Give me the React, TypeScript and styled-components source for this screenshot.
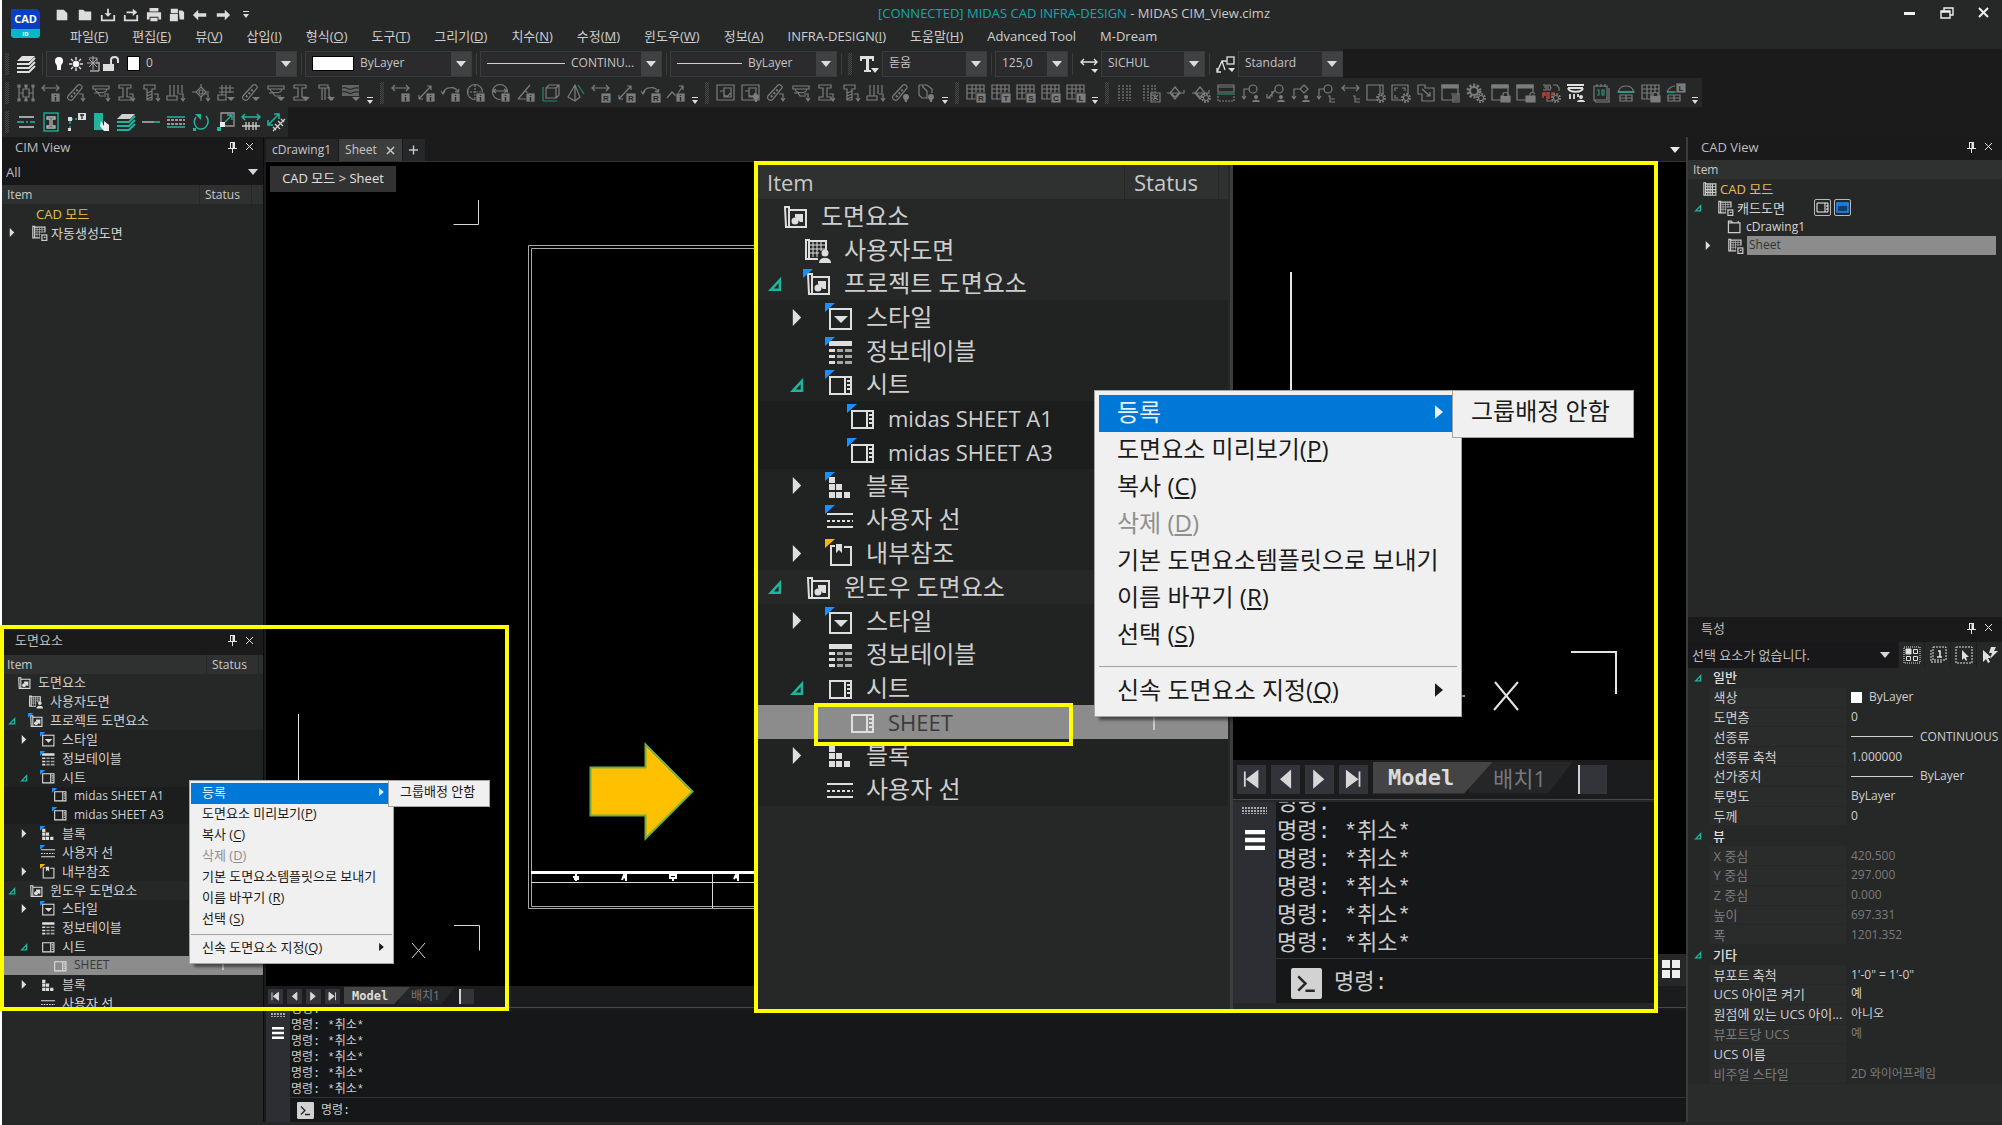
import React from 'react';
import styled, { createGlobalStyle, ThemeProvider, css } from 'styled-components';

/* ---------- scales ---------- */

const small = {
  font: 13, latin: 12, head: 19, treeHeight: 339, root: 14, first: 6, indent: 12, expander: 20, icon: 15, iconGap: 7,
  statusWidth: 52, endWidth: 5, headPad: 5, tick: 39,
  menuWidth: 205, menuTop: 2, menuSide: 1, menuBottom: 4, item: 21, itemPad: 11, itemLift: 3, sepTop: 4, sepBottom: 3, arrow: 8,
  subLeft: 198, subWidth: 102, subHeight: 27, subTop: 1,
  bar: 22, nav: 15, navGap: 4, barPad: 2, tab: 66, tabHeight: 17, tabFont: 12, layout: 56, layoutPad: 12,
  side: 24, mono: 12, line: 16, logDrop: 1, prompt: 24, promptTop: 1, promptIcon: 17, promptPad: 7, promptGap: 7, burger: 12,
};
const large: typeof small = {
  font: 24, latin: 22, head: 34, treeHeight: 607, root: 22, first: 10, indent: 22, expander: 35, icon: 28, iconGap: 13,
  statusWidth: 94, endWidth: 10, headPad: 9, tick: 73,
  menuWidth: 368, menuTop: 4, menuSide: 4, menuBottom: 6, item: 37, itemPad: 18, itemLift: 4, sepTop: 12, sepBottom: 6, arrow: 14,
  subLeft: 357, subWidth: 182, subHeight: 48, subTop: 3,
  bar: 40, nav: 29, navGap: 5, barPad: 4, tab: 120, tabHeight: 32, tabFont: 22, layout: 104, layoutPad: 24,
  side: 43, mono: 22, line: 28, logDrop: 1, prompt: 44, promptTop: 5, promptIcon: 31, promptPad: 15, promptGap: 12, burger: 20,
};

const Global = createGlobalStyle`
  * { box-sizing: border-box; }
  body { margin: 0; background: #fff; overflow: hidden; }
  button, select, input { font: inherit; color: inherit; border: 0; margin: 0; padding: 0; background: none; }
  ul { list-style: none; margin: 0; padding: 0; }
  svg { display: block; flex: none; }
`;

/* ---------- frame ---------- */

const Root = styled.div`
  position: relative;
  height: 100vh;
  padding-left: 2px;
  display: flex;
  flex-direction: column;
  background: #fff;
  color: #d6d6d6;
  font: 13px/18px "Open Sans", "Noto Sans CJK KR", sans-serif;
`;
const Header = styled.header`
  display: flex;
  height: 49px;
  padding: 0 0 0 9px;
  background: #262827;
`;
const HeaderRows = styled.div`
  flex: 1;
  display: flex;
  flex-direction: column;
`;
const TitleRow = styled.div`
  display: flex;
  align-items: center;
  height: 25px;
  padding-left: 10px;
`;
const Quick = styled.div`
  display: flex;
  padding-top: 4px;
`;
const QuickButton = styled.button`
  width: 23px;
  height: 20px;
  display: grid;
  place-items: center;
  color: #dcdcdc;
`;
const Title = styled.div`
  flex: 1;
  text-align: center;
  color: #c9c9c9;
  span { color: #12a9a9; }
`;
const WindowButton = styled.button`
  width: 37px;
  height: 24px;
  display: grid;
  place-items: center;
  color: #f0f0f0;
`;
const MenuBar = styled.nav`
  display: flex;
  gap: 24px;
  padding: 2px 0 0 30px;
  button { white-space: nowrap; color: #cfcfcf; }
`;

const ToolRow = styled.div<{ $h: number }>`
  display: flex;
  height: ${p => p.$h}px;
  background: #1b1b1b;
`;
const ToolBar = styled.div`
  display: flex;
  align-items: center;
  background: #262827;
`;
const Grip = styled.i`
  width: 4px;
  height: 22px;
  margin: 0 4px 0 3px;
  background: repeating-conic-gradient(#484a49 0 25%, #262827 0 50%) 0 0 / 2px 2px;
`;
const Tool = styled.button<{ $on?: boolean }>`
  width: 25px;
  height: 26px;
  display: grid;
  place-items: center;
  color: ${p => (p.$on ? '#e0e0e0' : '#7c7c7c')};
`;
const Overflow = styled.button`
  width: 14px;
  height: 26px;
  padding-top: 16px;
  display: grid;
  place-items: center;
  color: #dcdcdc;
`;
const Combo = styled.label<{ $w: number }>`
  display: flex;
  align-items: center;
  width: ${p => p.$w}px;
  height: 26px;
  padding-left: 6px;
  gap: 6px;
  background: #2b2b2d;
  border: 1px solid #3a3b3d;
  select {
    flex: 1;
    min-width: 0;
    height: 24px;
    padding-bottom: 2px;
    appearance: none;
    color: #c4c4c4;
    font-size: 12px;
  }
`;
const ComboArrow = styled.span`
  width: 20px;
  height: 24px;
  display: grid;
  place-items: center;
  background: #3f4143;
  color: #dcdcdc;
`;
const Divider = styled.i`
  width: 1px;
  height: 22px;
  margin: 0 3px 0 4px;
  background: #3a3b3b;
`;
const Swatch = styled.i<{ $w: number }>`
  width: ${p => p.$w}px;
  height: 15px;
  background: #fff;
  border: 1px solid #000;
  flex: none;
`;
const LineSample = styled.i<{ $w: number }>`
  width: ${p => p.$w}px;
  height: 1px;
  background: #cfcfcf;
  flex: none;
`;

const Workspace = styled.main`
  flex: 1;
  min-height: 0;
  display: grid;
  grid-template-columns: 261px minmax(0, 1fr) 314px;
  border-bottom: 3px solid #262827;
`;
const Side = styled.aside`
  display: flex;
  flex-direction: column;
  min-height: 0;
  background: #262827;
`;
const Panel = styled.section<{ $grow?: boolean }>`
  display: flex;
  flex-direction: column;
  min-height: 0;
  ${p => p.$grow && css`flex: 1 1 0;`}
`;
const PanelHead = styled.div<{ $tall?: boolean }>`
  display: flex;
  align-items: center;
  height: ${p => (p.$tall ? 25 : 23)}px;
  flex: none;
  padding: 0 5px 4px 13px;
  background: #1a1a1b;
  color: #bdbdbd;
  h2 { flex: 1; margin: 0; font: inherit; }
`;
const HeadButton = styled.button`
  width: 17px;
  height: 18px;
  display: grid;
  place-items: center;
  color: #e6e6e6;
`;
const Filter = styled.label`
  display: flex;
  align-items: center;
  height: 25px;
  flex: none;
  padding: 0 5px 1px 4px;
  background: #18181a;
  select { flex: 1; min-width: 0; appearance: none; color: #bdbdbd; }
`;

/* ---------- tree ---------- */

const Columns = styled.div<{ $end?: number }>`
  display: flex;
  flex: none;
  height: ${p => p.theme.head}px;
  line-height: ${p => p.theme.head}px;
  font-size: ${p => p.theme.latin}px;
  background: #2f3130;
  color: #c9c9c9;
  span { padding-left: ${p => p.theme.headPad}px; }
  span:nth-child(1) { flex: 1; }
  span:nth-child(2) { width: ${p => p.theme.statusWidth}px; border-left: 1px solid #252626; }
  span:nth-child(3) { width: ${p => p.$end ?? p.theme.endWidth}px; padding: 0; border-left: 1px solid #252626; }
`;
const TreeClip = styled.div<{ $h?: number }>`
  overflow: hidden;
  ${p => p.$h && css`height: ${p.$h}px;`}
`;
const TreeList = styled.ul`
  display: grid;
  grid-auto-rows: 1fr;
  height: ${p => p.theme.treeHeight}px;
`;
const TreeRow = styled.li<{ $level: number; $selected?: boolean }>`
  display: flex;
  align-items: center;
  overflow: hidden;
  font-size: ${p => p.theme.font}px;
  line-height: 1;
  white-space: nowrap;
  padding-left: ${p => (p.$level === 0 ? p.theme.root : p.theme.first + (p.$level - 1) * p.theme.indent)}px;
  color: ${p => (p.$selected ? '#3a3a3a' : '#cfcfcf')};
  background: ${p => (p.$selected ? '#8c8c8c' : ['#262827', '#262827', '#212222', '#1c1d1d'][p.$level])};
`;
const Expander = styled.span`
  width: ${p => p.theme.expander}px;
  svg { width: ${p => Math.round(p.theme.icon * 0.5)}px; height: ${p => Math.round(p.theme.icon * 0.6)}px; }
`;
const TreeIcon = styled.span`
  margin-right: ${p => p.theme.iconGap}px;
  color: #dedede;
  svg { width: ${p => p.theme.icon}px; height: ${p => p.theme.icon}px; }
`;
const Latin = styled.span`
  font-size: ${p => p.theme.latin}px;
`;
const StatusTick = styled.i`
  width: 2px;
  height: 50%;
  margin: 0 ${p => p.theme.tick}px 0 auto;
  background: #c8c8c8;
`;

type GlyphName = 'root' | 'user' | 'style' | 'table' | 'sheet' | 'block' | 'line' | 'ref' | 'auto' | 'folder';

const Glyph = ({ name, flag }: { name: GlyphName; flag?: string }) => (
  <svg viewBox="0 0 28 28" fill="none" stroke="currentColor" strokeWidth="2">
    {name === 'root' && <><path d="M5 5h4v20H6zM9 8h17v17H6" /><circle cx="15" cy="19" r="3.5" fill="currentColor" stroke="none" /><path d="M15 12h8v8h-3l-5-5z" fill="currentColor" stroke="none" /></>}
    {(name === 'user' || name === 'auto') && <><path d="M3 4h3v19H3zM6 5h17v9M4 23h11" /><path d="M10 6v15M14 6v15M18 6v9M7 9h16M7 13h16M7 17h9" strokeWidth="1" /></>}
    {name === 'user' && <><circle cx="22" cy="17" r="3.5" fill="currentColor" stroke="none" /><path d="M16 27c0-3 2-5 6-5s6 2 6 5z" fill="currentColor" stroke="none" /></>}
    {name === 'auto' && <><rect x="18" y="18" width="8" height="9" /><path d="M21 22h3" /></>}
    {name === 'style' && <><rect x="5" y="6" width="21" height="20" /><path d="M9 13h14l-7 7z" fill="currentColor" stroke="none" /></>}
    {name === 'table' && <><path d="M4 4h23v5H4zM4 12h6v3H4zM4 18h6v3H4zM4 24h6v3H4z" fill="currentColor" stroke="none" /><path d="M12 12h6v3h-6zM20 12h7v3h-7zM12 18h6v3h-6zM20 18h7v3h-7zM12 24h6v3h-6zM20 24h7v3h-7z" fill="currentColor" opacity=".7" stroke="none" /></>}
    {name === 'sheet' && <><path d="M5 7h21v17H5z" /><path d="M20 7v17" /><path d="M22 11h3M22 15h3M22 19h3" /></>}
    {name === 'block' && <path d="M4 5h6v6H4zM4 12h6v6H4zM11 12h6v6h-6zM4 20h6v6H4zM11 20h6v6h-6zM19 20h6v6h-6z" fill="currentColor" stroke="none" />}
    {name === 'line' && <><path d="M2 9h26M2 22h26" /><path d="M2 16h26" strokeDasharray="3 2" /></>}
    {name === 'ref' && <><path d="M10 7H6v19h20V8h-7" /><path d="M11 5h6v9l-3-3-3 3z" fill="currentColor" stroke="none" /></>}
    {name === 'folder' && <path d="M4 8h19v16H4zM4 8V5h5l2 3M20 5v3" />}
    {flag && <path d="M0 0h10L0 9z" fill={flag} stroke="none" />}
  </svg>
);

const Twist = ({ open }: { open: boolean }) =>
  open ? (
    <svg viewBox="0 0 10 12" fill="none" stroke="#1fb59c" strokeWidth="1.8"><path d="M8.500 3.500v7H2z" /></svg>
  ) : (
    <svg viewBox="0 0 10 12" fill="#dedede"><path d="M2 0l6 6-6 6z" /></svg>
  );

type Node = { level: number; icon: GlyphName; text: string; flag?: string; open?: boolean; selected?: boolean };
const BLUE = '#1a8fff';
const nodes: Node[] = [
  { level: 0, icon: 'root', text: '도면요소' },
  { level: 1, icon: 'user', text: '사용자도면' },
  { level: 1, icon: 'root', text: '프로젝트 도면요소', flag: BLUE, open: true },
  { level: 2, icon: 'style', text: '스타일', flag: BLUE, open: false },
  { level: 2, icon: 'table', text: '정보테이블', flag: BLUE },
  { level: 2, icon: 'sheet', text: '시트', flag: BLUE, open: true },
  { level: 3, icon: 'sheet', text: 'midas SHEET A1', flag: BLUE },
  { level: 3, icon: 'sheet', text: 'midas SHEET A3', flag: BLUE },
  { level: 2, icon: 'block', text: '블록', flag: BLUE, open: false },
  { level: 2, icon: 'line', text: '사용자 선', flag: BLUE },
  { level: 2, icon: 'ref', text: '내부참조', flag: '#f5b800', open: false },
  { level: 1, icon: 'root', text: '윈도우 도면요소', open: true },
  { level: 2, icon: 'style', text: '스타일', flag: BLUE, open: false },
  { level: 2, icon: 'table', text: '정보테이블' },
  { level: 2, icon: 'sheet', text: '시트', open: true },
  { level: 3, icon: 'sheet', text: 'SHEET', selected: true },
  { level: 2, icon: 'block', text: '블록', open: false },
  { level: 2, icon: 'line', text: '사용자 선' },
];

const ElementTree = ({ clip }: { clip?: number }) => (
  <>
    <Columns><span>Item</span><span>Status</span><span /></Columns>
    <TreeClip $h={clip}>
      <TreeList>
        {nodes.map((n, i) => (
          <TreeRow key={i} $level={n.level} $selected={n.selected}>
            {n.level > 0 && <Expander>{n.open !== undefined && <Twist open={n.open} />}</Expander>}
            <TreeIcon><Glyph name={n.icon} flag={n.flag} /></TreeIcon>
            {n.level === 3 ? <Latin>{n.text}</Latin> : n.text}
            {n.selected && <StatusTick />}
          </TreeRow>
        ))}
      </TreeList>
    </TreeClip>
  </>
);

/* ---------- context menu ---------- */

const MenuBox = styled.div<{ $x: number; $y: number }>`
  position: absolute;
  z-index: 3;
  left: ${p => p.$x}px;
  top: ${p => p.$y}px;
  width: ${p => p.theme.menuWidth}px;
  padding: ${p => `${p.theme.menuTop}px ${p.theme.menuSide}px ${p.theme.menuBottom}px`};
  background: #f0f0f0;
  border: 1px solid #a5a5a5;
  box-shadow: 4px 4px 3px -1px rgba(0, 0, 0, 0.5);
  font-size: ${p => p.theme.font}px;
  color: #1a1a1a;
`;
const MenuItem = styled.button<{ $active?: boolean }>`
  display: flex;
  align-items: center;
  justify-content: space-between;
  width: 100%;
  height: ${p => p.theme.item}px;
  line-height: 1;
  padding: 0 ${p => p.theme.arrow}px ${p => p.theme.itemLift}px ${p => p.theme.itemPad}px;
  white-space: nowrap;
  background: ${p => (p.$active ? '#0078d7' : 'transparent')};
  color: ${p => (p.$active ? '#e8f2fc' : '#1a1a1a')};
  &:disabled { color: #8f8f8f; }
  u { text-underline-offset: 2px; }
  svg { width: ${p => Math.round(p.theme.arrow * 0.6)}px; height: ${p => p.theme.arrow}px; }
`;
const MenuLine = styled.hr`
  height: 1px;
  border: 0;
  margin: ${p => p.theme.sepTop}px 0 ${p => p.theme.sepBottom}px;
  background: #a0a0a0;
`;
const SubMenu = styled.div`
  position: absolute;
  left: ${p => p.theme.subLeft}px;
  top: -1px;
  width: ${p => p.theme.subWidth}px;
  height: ${p => p.theme.subHeight}px;
  padding-top: ${p => p.theme.subTop}px;
  background: #f0f0f0;
  border: 1px solid #a5a5a5;
`;
const MenuArrow = () => <svg viewBox="0 0 6 10" fill="currentColor"><path d="M0 0l6 5-6 5z" /></svg>;

const ContextMenu = ({ x, y }: { x: number; y: number }) => (
  <MenuBox $x={x} $y={y} role="menu">
    <MenuItem $active><span>등록</span><MenuArrow /></MenuItem>
    <MenuItem><span>도면요소 미리보기(<u>P</u>)</span></MenuItem>
    <MenuItem><span>복사 (<u>C</u>)</span></MenuItem>
    <MenuItem disabled><span>삭제 (<u>D</u>)</span></MenuItem>
    <MenuItem><span>기본 도면요소템플릿으로 보내기</span></MenuItem>
    <MenuItem><span>이름 바꾸기 (<u>R</u>)</span></MenuItem>
    <MenuItem><span>선택 (<u>S</u>)</span></MenuItem>
    <MenuLine />
    <MenuItem><span>신속 도면요소 지정(<u>Q</u>)</span><MenuArrow /></MenuItem>
    <SubMenu><MenuItem><span>그룹배정 안함</span></MenuItem></SubMenu>
  </MenuBox>
);

/* ---------- layout tabs and command line ---------- */

const LayoutBar = styled.div`
  display: flex;
  align-items: center;
  flex: none;
  height: ${p => p.theme.bar}px;
  padding: 0 0 0 ${p => p.theme.barPad}px;
  gap: ${p => p.theme.navGap}px;
  background: #1b1c1e;
  border-bottom: 1px solid #47484a;
`;
const Nav = styled.button`
  width: ${p => p.theme.nav}px;
  height: ${p => p.theme.nav}px;
  display: grid;
  place-items: center;
  background: #33343a;
  color: #d8d8d8;
  svg { width: 70%; height: 70%; }
`;
const ModelTab = styled.button`
  position: relative;
  z-index: 1;
  width: ${p => p.theme.tab}px;
  height: ${p => p.theme.tabHeight}px;
  margin-bottom: ${p => p.theme.barPad}px;
  padding-left: ${p => Math.round(p.theme.nav / 2)}px;
  text-align: left;
  font: bold ${p => p.theme.tabFont}px/1 "DejaVu Sans Mono", monospace;
  background: #444;
  color: #dcdcdc;
  clip-path: polygon(0 0, 100% 0, 76% 100%, 0 100%);
`;
const LayoutTab = styled(ModelTab)`
  z-index: 0;
  width: ${p => p.theme.layout}px;
  padding-left: ${p => p.theme.layoutPad}px;
  margin-left: -${p => p.theme.nav}px;
  font: ${p => p.theme.tabFont}px/1 "Open Sans", "Noto Sans CJK KR", sans-serif;
  background: #242628;
  color: #77787c;
`;
const Thumb = styled(Nav)`
  border-left: 2px solid #d0d0d0;
`;
const navPaths = ['M3 2v12M13 2L5 8l8 6z', 'M12 2L5 8l7 6z', 'M4 2l7 6-7 6z', 'M13 2v12M3 2l8 6-8 6z'];

const LayoutTabs = () => (
  <LayoutBar>
    {navPaths.map((d, i) => (
      <Nav key={i} aria-label={`layout ${i + 1}`}>
        <svg viewBox="0 0 16 16" fill="currentColor" stroke="currentColor" strokeWidth="1.4"><path d={d} /></svg>
      </Nav>
    ))}
    <ModelTab>Model</ModelTab>
    <LayoutTab>배치1</LayoutTab>
    <Thumb aria-label="scroll" />
  </LayoutBar>
);

const CommandBox = styled.section<{ $h?: number }>`
  display: flex;
  flex: none;
  height: ${p => p.$h}px;
  margin-top: 2px;
  background: #161719;
`;
const CommandSide = styled.div`
  width: ${p => p.theme.side}px;
  background: #2d2e33;
  display: flex;
  flex-direction: column;
  align-items: center;
  padding-top: ${p => Math.round(p.theme.burger / 4)}px;
  gap: ${p => Math.round(p.theme.burger * 0.8)}px;
  color: #fff;
`;
const Dots = styled.i`
  width: 60%;
  height: ${p => Math.round(p.theme.burger / 3)}px;
  background: radial-gradient(circle at 1px 1px, #a8a8a8 1px, transparent 1px) 0 0 / 3px 3px;
`;
const CommandMain = styled.div`
  flex: 1;
  display: flex;
  flex-direction: column;
  min-width: 0;
  font: ${p => `${p.theme.mono}px/${p.theme.line}px`} "Liberation Mono", "Noto Sans CJK KR", monospace;
  color: #cdcdcd;
`;
const Log = styled.div`
  flex: 1;
  min-height: 0;
  overflow: hidden;
  display: flex;
  flex-direction: column;
  justify-content: flex-end;
  padding-left: 1px;
  border-bottom: 1px solid #2f3033;
  div { flex: none; white-space: pre; }
  div:last-child { margin-bottom: -${p => p.theme.logDrop}px; }
`;
const Prompt = styled.label`
  display: flex;
  align-items: center;
  height: ${p => p.theme.prompt}px;
  padding: ${p => p.theme.promptTop}px 0 0 ${p => p.theme.promptPad}px;
  gap: ${p => p.theme.promptGap}px;
  svg { width: ${p => p.theme.promptIcon}px; height: ${p => p.theme.promptIcon}px; }
  input { flex: 1; min-width: 0; }
`;
const Burger = styled.span`
  svg { width: ${p => p.theme.burger}px; height: ${p => p.theme.burger}px; }
`;

const CommandLine = ({ height }: { height: number }) => (
  <CommandBox $h={height}>
    <CommandSide>
      <Dots />
      <Burger><svg viewBox="0 0 12 12" fill="currentColor"><path d="M0 0h12v2.6H0zM0 4.7h12v2.6H0zM0 9.4h12V12H0z" /></svg></Burger>
    </CommandSide>
    <CommandMain>
      <Log>
        <div>명령:</div>
        {[0, 1, 2, 3, 4].map(i => <div key={i}>명령: *취소*</div>)}
      </Log>
      <Prompt>
        <svg viewBox="0 0 30 30"><rect width="30" height="30" rx="2" fill="#d2d2d2" /><path d="M7 8l7 7-7 7M14 22h9" fill="none" stroke="#26282a" strokeWidth="2.4" /></svg>
        <span>명령:</span>
        <input aria-label="명령" />
      </Prompt>
    </CommandMain>
  </CommandBox>
);

/* ---------- drawing area ---------- */

const Center = styled.section`
  display: flex;
  flex-direction: column;
  min-height: 0;
  min-width: 0;
  padding-left: 2px;
  background: #1b1b1b;
  border-left: 1px solid #0c0c0c;
  border-right: 2px solid #3a3b3b;
`;
const DocTabs = styled.div`
  display: flex;
  align-items: flex-end;
  height: 25px;
  flex: none;
  gap: 1px;
  font-size: 12px;
  background: #1b1b1b;
  border-bottom: 1px solid #333;
`;
const DocTab = styled.button<{ $active?: boolean }>`
  display: flex;
  align-items: center;
  gap: 9px;
  height: 22px;
  padding: 0 7px 0 6px;
  background: ${p => (p.$active ? '#3c3d3d' : '#262728')};
  color: #c8c8c8;
`;
const DocSpacer = styled.div`
  flex: 1;
`;
const DocMore = styled.button`
  width: 22px;
  height: 22px;
  display: grid;
  place-items: center;
  color: #e8e8e8;
`;
const Canvas = styled.div`
  position: relative;
  flex: 1;
  min-height: 0;
  overflow: hidden;
  background: #000;
  > svg { position: absolute; left: 0; top: 0; }
`;
const Crumb = styled.div`
  position: absolute;
  left: 4px;
  top: 4px;
  width: 126px;
  height: 26px;
  line-height: 24px;
  text-align: center;
  background: #323232;
  color: #e0e0e0;
`;
const ViewButton = styled.button`
  position: absolute;
  right: 0;
  bottom: 0;
  width: 31px;
  height: 32px;
  padding-bottom: 2px;
  display: grid;
  place-items: center;
  background: #262827;
  color: #efefef;
`;

const Drawing = () => (
  <svg width="1420" height="822" viewBox="266 162 1420 822" fill="none" stroke="#d8d8d8" strokeWidth="1">
    <path d="M478.500 200v24.500h-25" />
    <path d="M454 925.500h25.500v25" />
    <path d="M298.500 714v68" stroke="#e8e8e8" />
    <path d="M412 943l13 15M425 943l-13 15" />
    <path d="M1300 245.500H528.500V908.500H1300M1300 248.500H531.500V906.500H1300" stroke="#a9a9a9" />
    <path d="M531 872.500h769" stroke="#fff" strokeWidth="3" />
    <path d="M531 882.500h769M712.500 874v34" />
    <path d="M573 877h6M576 874v7M574 879h5M622 880l2-5 2 4M626 874v7M670 875h6v3h-6zM673 878v3M734 879l2-4 2 4M738 874v7" stroke="#fff" strokeWidth="2" />
    <path d="M590.500 767.500h55v-23l47 47-47 47v-23h-55z" fill="#ffc000" stroke="#70ad47" strokeWidth="2" />
  </svg>
);

/* ---------- properties ---------- */

const SelectionRow = styled.div`
  display: flex;
  height: 26px;
  flex: none;
  background: #262827;
`;
const SelectionPick = styled(Filter)`
  flex: 1;
  min-width: 0;
  height: 26px;
  padding: 0 8px 0 4px;
`;
const PropButton = styled.button`
  width: 26px;
  height: 26px;
  display: grid;
  place-items: center;
  border-left: 1px solid #1d1e1e;
  color: #e0e0e0;
`;
const PropTable = styled.table`
  width: 100%;
  height: 416px;
  flex: none;
  table-layout: fixed;
  border-collapse: collapse;
  font-size: 13px;
  line-height: 16px;
  text-align: left;
  col:nth-child(1) { width: 20px; }
  col:nth-child(2) { width: 138px; }
  th, td { padding: 0 0 0 5px; white-space: nowrap; overflow: hidden; text-overflow: ellipsis; font-weight: 400; }
  td { font-size: 12px; }
`;
const Group = styled.tr`
  background: #262827;
  color: #dedede;
  td { padding-left: 6px; }
  th { font-weight: 500; }
`;
const PropRow = styled.tr<{ $dim?: boolean }>`
  color: ${p => (p.$dim ? '#7b7b7b' : '#cfcfcf')};
  th, td + td { background: #2a2b2b; border: 1px solid #262827; border-right: 0; }
  > :first-child { background: #262827; }
`;
const Value = styled.span`
  display: flex;
  align-items: center;
  gap: 7px;
`;
const Box = styled.i`
  width: 11px;
  height: 11px;
  background: #fff;
`;
const PropRest = styled.div`
  height: 38px;
  background: #2a2b2b;
`;

type Prop = [string, React.ReactNode, boolean?];
const groups: { name: string; rows: Prop[] }[] = [
  { name: '일반', rows: [
    ['색상', <Value key="v"><Box />ByLayer</Value>], ['도면층', '0'],
    ['선종류', <Value key="v"><LineSample $w={62} />CONTINUOUS</Value>], ['선종류 축척', '1.000000'],
    ['선가중치', <Value key="v"><LineSample $w={62} />ByLayer</Value>], ['투명도', 'ByLayer'], ['두께', '0'],
  ] },
  { name: '뷰', rows: [
    ['X 중심', '420.500', true], ['Y 중심', '297.000', true], ['Z 중심', '0.000', true], ['높이', '697.331', true], ['폭', '1201.352', true],
  ] },
  { name: '기타', rows: [
    ['뷰포트 축척', '1\'-0" = 1\'-0"'], ['UCS 아이콘 켜기', '예'], ['원점에 있는 UCS 아이...', '아니오'],
    ['뷰포트당 UCS', '예', true], ['UCS 이름', ''], ['비주얼 스타일', '2D 와이어프레임', true],
  ] },
];

/* ---------- simple lists in the side panels ---------- */

const PlainRow = styled.div<{ $pad: number }>`
  display: flex;
  align-items: center;
  height: 19px;
  padding-left: ${p => p.$pad}px;
  gap: 3px;
  white-space: nowrap;
`;
const Gold = styled.span`
  color: #e3c04a;
`;
const Picked = styled.span`
  flex: 1;
  height: 19px;
  line-height: 18px;
  margin-right: 6px;
  padding-left: 2px;
  font-size: 12px;
  background: #8c8c8c;
  color: #333;
`;
const Mini = styled.button`
  width: 17px;
  height: 17px;
  display: grid;
  place-items: center;
  border: 1px solid #b8b8b8;
  border-radius: 2px;
`;
const ModeIcons = styled.span`
  display: flex;
  gap: 3px;
  margin-left: 26px;
`;

/* ---------- annotations ---------- */

const Marker = styled.div<{ $x: number; $y: number; $w: number; $h: number }>`
  position: absolute;
  z-index: 2;
  left: ${p => p.$x}px;
  top: ${p => p.$y}px;
  width: ${p => p.$w}px;
  height: ${p => p.$h}px;
  border: 4px solid #ffff00;
  pointer-events: none;
`;
const Magnified = styled.div`
  position: absolute;
  z-index: 4;
  left: 754px;
  top: 161px;
  width: 904px;
  height: 852px;
  display: flex;
  border: 4px solid #ffff00;
  background: #262827;
`;
const MagTree = styled.div`
  width: 470px;
  flex: none;
`;
const MagRight = styled.div`
  flex: 1;
  min-width: 0;
  display: flex;
  flex-direction: column;
  margin-left: 2px;
  padding-bottom: 6px;
  border-left: 3px solid #3c3d3d;
`;

/* ---------- toolbar icons ---------- */

const G = '#1fb59c';
const base: Record<string, React.ReactNode> = {
  grid: <path d="M3 3v14M17 3v14M10 2v4M10 14v4M3 10h4M13 10h4M7 6h6v8H7zM2 2h2v2H2zM16 2h2v2h-2zM9 2h2v2H9zM2 16h2v2H2zM9 16h2v2H9zM16 16h2v2h-2z" />,
  dim: <path d="M1 5h17M4 2L1 5l3 3M15 2l3 3-3 3" />,
  pipe: <><path d="M2 13L12 2c2-1 5 1 4 3L7 16c-2 3-7 0-5-3z" /><path d="M5 14l8-9" strokeDasharray="2 2" strokeWidth="2" /></>,
  dish: <path d="M2 3h16v3H2zM4 6c1 5 11 5 12 0M3 10h4l2 3h6" />,
  beam: <path d="M3 2h12v3h-4v9h4v3H3v-3h4V5H3z" />,
  bolt: <path d="M3 2h11v4h-3v11H6V6H3zM6 10l5-2M6 13l5-2M6 16l5-2" />,
  pile: <path d="M4 2v11M8 2v11M12 2v9M1 13h10v4H1zM16 2v8" />,
  target: <><path d="M10 1v4M10 14v4M1 9h4M14 9h4M10 4l5 5-5 5-5-5z" /><circle cx="10" cy="9" r="2" /></>,
  hash: <path d="M6 2v10M10 2v10M14 2v8M3 5h15M3 9h15M2 12h8v5H2z" />,
  bars: <path d="M3 2h9v3H3zM6 5v12M9 5v12M13 4v9l4 4" />,
  wave: <><path d="M1 2h17v11H1z" fill="currentColor" stroke="none" opacity=".7" /><path d="M1 5c5-2 6 3 10 1s4-1 7-1M1 9c5-2 6 3 10 1s4-1 7-1" stroke="#262827" /></>,
  diag: <path d="M3 16L15 3M11 3h4v4M3 12v4h4" />,
  arc: <path d="M2 11C3 3 15 3 17 9M14 8l3 2 1-4M4 8l-2 3-2-3" />,
  circ: <><circle cx="9" cy="9" r="7.500" /><path d="M1 9h16" strokeDasharray="2 1" /><path d="M9 2v14" strokeDasharray="2 1" /></>,
  circH: <><circle cx="9" cy="9" r="7.500" /><path d="M2 8h14M5 6L2 8l3 2M13 6l3 2-3 2" /></>,
  angle: <path d="M2 16h13M2 16L14 2M9 8c3 1 4 4 4 8" />,
  cube: <><path d="M5 5h10v10H5zM5 5l3-3h10v10l-3 3M15 5l3-3" /><path d="M2 4v14M2 18h14" stroke={G} opacity=".7" /></>,
  prism: <><path d="M9 2L2 14l7 4 5-4zM9 2v16" /><path d="M12 2l6 9" stroke={G} opacity=".7" /></>,
  spark: <path d="M1 15l5-6 4 4 7-10M13 3h4v4" />,
  frame: <><path d="M1 2h17v15H1z" /><path d="M8 5h7v9H8zM4 8h4v4c3 2 5 1 6-2" /></>,
  tag: <path d="M3 2h8l5 4v4M3 2v10l3 3h5V8L6 3" />,
  table: <path d="M1 2h17v14H1zM1 6h17M1 10h17M6 2v14M10 2v14M14 2v14" />,
  dots: <><path d="M3 2v16M7 2v16" strokeDasharray="2 1" /><path d="M11 2v16M14 2v16" strokeDasharray="2 1" /></>,
  level: <><path d="M9 4l5 6-5 6-5-6z" /><path d="M1 10h17V7M5 10h8l-4 4z" /></>,
  split: <><path d="M2 2h16v7H2zM2 4h16" /><path d="M1 11h18" stroke={G} opacity=".7" /><path d="M2 13v5h16v-5" strokeDasharray="2 1" /></>,
  leader: <><circle cx="12" cy="6" r="4" /><path d="M8 6H3v10M1 13l2 3 2-3" /></>,
  leader2: <><circle cx="13" cy="6" r="4" /><path d="M9 7l-3 4-4 4M1 11v4h4M6 8v6" /></>,
  leader3: <path d="M13 2l4 4-4 4-4-4zM9 6H3v10M1 13l2 3 2-3" />,
  win: <path d="M1 2h16v15H1zM14 2v15" />,
  winF: <><path d="M1 2h16v15H1z" /><path d="M1 2h16v3H1z" fill="currentColor" /></>,
  expand: <path d="M1 2h16v15H1zM4 8V5h3M14 8V5h-3M4 12v3h3" />,
  scale: <path d="M2 2h7v3h9v13H6v-7H2zM6 6l8 7M10 13h4V9" />,
  gear: <><circle cx="8" cy="8" r="6" strokeWidth="3" strokeDasharray="2.200 1.600" /><circle cx="8" cy="8" r="4" strokeWidth="2" /></>,
  pdf: <><path d="M12 2h4l2 3v3M6 16v2h6M2 2h3v2H3h2v3H2M7 2v5h2l1-2-1-3z" /><path d="M2 15v-5h2v2H2M6 10v5h2V10zM11 15v-5h3M11 12h2" stroke="#b8413a" strokeWidth="1.500" /></>,
  bridge: <path d="M1 2h17M2 5h15M2 5c1 5 14 5 15 0M4 11v5M8 11v5M12 11v3" strokeWidth="1.800" />,
  book: <><path d="M3 3h13v14H3zM3 17l2 2h13V5M6 1v3M10 1v3M14 1v3" /><path d="M6 7h2v5H6M11 7h2v5h-2z" stroke={G} opacity=".8" /></>,
  stamp: <><path d="M2 9c2-5 4-6 8-6s6 1 8 6zM4 12h12v6H4zM10 12v6M4 15h12" /><path d="M2 9h16" stroke={G} strokeWidth="2" opacity=".7" /></>,
  stampL: <><path d="M1 9c2-4 4-6 8-6M2 12h12v6H2zM8 12v6M2 15h12" /><path d="M1 9h10" stroke={G} strokeWidth="2" opacity=".7" /></>,
};
const badge: Record<string, React.ReactNode> = {
  dn: <path d="M13 11h4v6M15 15l2 3 2-3" />,
  tri: <path d="M11 14h8l-4 4z" fill="currentColor" stroke="none" />,
  i: <><path d="M10 10h9v9h-9z" fill="currentColor" stroke="#262827" strokeWidth=".8" /><path d="M14.500 12v1M14.500 14v4" stroke="#262827" strokeWidth="1.500" /></>,
  x: <path d="M10 10h9v9h-9zM12 12l5 5M17 12l-5 5" fill="none" />,
  gear: <><circle cx="15" cy="15" r="4" fill="#262827" strokeDasharray="1.800 1.300" strokeWidth="2" /><circle cx="15" cy="15" r="2.500" /></>,
  user: <path d="M13 14a2 2 0 114 0 2 2 0 01-4 0M11 19c0-3 8-3 8 0z" fill="currentColor" stroke="none" />,
  lock: <><path d="M10 13h9v6h-9z" fill="currentColor" /><path d="M12 13v-2c0-2 5-2 5 0v2" fill="#262827" /></>,
  lock2: <><path d="M10 13h9v6h-9z" fill="currentColor" /><path d="M14 13v-2c0-2 4-2 5 0" fill="#262827" /></>,
  trash: <path d="M10 11h9M12 12v7h6v-7M14 12v6M16 12v6" fill="#262827" />,
  lev: <path d="M12 13h2v6h5M15 16h4" />,
  bulb: <path d="M12 14a3 3 0 116 0c0 2-2 2-2 5h-2c0-3-2-3-2-5z" fill="currentColor" stroke="none" />,
};
const Letter = ({ c, top }: { c: string; top?: boolean }) => (
  <g transform={top ? 'translate(0 -10)' : undefined}>
    <rect x="10" y="10" width="10" height="10" fill="currentColor" stroke="#262827" strokeWidth=".8" />
    <text x="15" y="18" fontSize="8" fontWeight="bold" fontFamily="Liberation Sans" textAnchor="middle" fill="#262827" stroke="none">{c}</text>
  </g>
);
const Icon = ({ spec }: { spec: string }) => {
  const [b, g] = spec.split('+');
  return (
    <svg width="20" height="20" viewBox="0 0 20 20" fill="none" stroke="currentColor" strokeWidth="1.2">
      {base[b]}
      {g && (/^[A-Z]$/.test(g) ? <Letter c={g} top={b === 'stampL'} /> : badge[g])}
    </svg>
  );
};
const toolGroups: string[][] = [
  ['grid', 'dim+i', 'pipe+dn', 'dish+dn', 'beam+dn', 'bolt+dn', 'pile+dn', 'target+dn', 'hash+tri', 'pipe+tri', 'dish+tri', 'beam+tri', 'bars+tri', 'wave+tri'],
  ['dim+i', 'diag+i', 'arc+i', 'circ+i', 'circH+i', 'angle+i', 'cube', 'prism', 'dim+R', 'diag+R', 'arc+R', 'spark+i'],
  ['frame', 'frame+bulb', 'pipe+dn', 'dish+dn', 'beam+dn', 'bolt+dn', 'pile+dn', 'pipe+bulb', 'tag+bulb'],
  ['table+R', 'table+T', 'table+S', 'table+C', 'table+L'],
  ['dots', 'dots+x', 'level', 'level+gear', 'split', 'leader+user', 'leader2+user', 'leader3+user', 'leader+lev', 'dim+lev', 'win+gear', 'expand+gear', 'scale', 'winF+trash', 'gear+gear', 'winF+lock', 'winF+lock2', 'pdf+gear', 'bridge+user', 'book', 'stamp', 'table+lock', 'stampL+L'],
];
const editTools: React.ReactNode[] = [
  <><path d="M3 5h15M3 15h15" stroke="#ccc" /><path d="M1 10h18" stroke={G} strokeDasharray="7 2 2 2" /></>,
  <><rect x="3" y="1" width="14" height="18" stroke={G} /><path d="M6 5h8v2h-3v7h3v2H6v-2h3V7H6z" stroke="#bbb" /></>,
  <><path d="M4 17V7h7" stroke={G} strokeDasharray="3 2" /><path d="M2 5h4v4H2zM2 16h3v3H2zM12 1h8v7h-8z" fill="#ddd" stroke="none" /><path d="M14 3h4M16 3v4" stroke="#222" /></>,
  <><path d="M3 1h9v17H3z" fill={G} stroke="none" /><path d="M10 9l3 5V9l5 4v6h-5l-4-5z" fill="#eee" stroke="none" /></>,
  <><path d="M6 2h13l-5 5H1z" fill="#d0d0d0" stroke="none" /><path d="M1 10h12l6-6M1 14h12l6-6M1 18h12l6-6" stroke={G} strokeWidth="2" /></>,
  <><path d="M1 10h12" stroke="#ccc" /><path d="M13 10h6" stroke={G} strokeWidth="1.6" /></>,
  <><path d="M1 5h18M1 15h18" stroke={G} /><path d="M1 8h18M1 12h18" stroke="#bbb" strokeDasharray="3 1" /></>,
  <><path d="M5 5c-4 6 0 12 5 12s10-7 5-13" stroke={G} strokeWidth="1.5" /><path d="M4 2h6v6z" fill={G} stroke="none" /><path d="M2 16h3v3H2z" fill={G} stroke="none" /></>,
  <><path d="M5 1h13v13H5z" stroke="#999" /><path d="M9 10l7-7M11 3h5v5" stroke={G} /><path d="M4 10h5v5H4z" fill="#eee" stroke="none" /><path d="M1 15h4v4H1z" fill={G} stroke="none" /></>,
  <><path d="M1 5h18M4 2L1 5l3 3M16 2l3 3-3 3" stroke={G} strokeWidth="1.5" /><path d="M1 14h18M5 10v8M8 10v8M12 10v8M15 10v8" stroke="#ccc" /></>,
  <><path d="M2 13L13 2M8 2h5v5M2 8v5h5" stroke={G} strokeWidth="1.5" /><path d="M7 19L19 7M9 12l5 5M12 9l5 5M7 15l3 3M15 7l3 3" stroke="#ccc" /></>,
];
const quickIcons = [
  'M3 3h8l4 4v8H3z', 'M2 3h5l2 2h7v10H2z', 'M1 9h2v5h12V9h2v7H1zM8 2h2v5h3l-4 4-4-4h3z', 'M1 9h2v5h12V9h2v7H1zM4 5h7V2l5 4-5 4V7H4z',
  'M4 1h10v4H4zM1 6h16v8h-3v-3H4v3H1zM5 12h8v4H5z', 'M2 2h8v5H2zM1 8h9v8H1zM11 4h4l2 2v8h-5z', 'M1 9l6-6v4h9v4H7v4z', 'M17 9l-6-6v4H2v4h9v4z',
];
const menus: [string, string?][] = [
  ['파일', 'F'], ['편집', 'E'], ['뷰', 'V'], ['삽입', 'I'], ['형식', 'O'], ['도구', 'T'], ['그리기', 'D'], ['치수', 'N'],
  ['수정', 'M'], ['윈도우', 'W'], ['정보', 'A'], ['INFRA-DESIGN', 'I'], ['도움말', 'H'], ['Advanced Tool'], ['M-Dream'],
];

const Caret = () => <svg width="10" height="6" viewBox="0 0 10 6" fill="currentColor"><path d="M0 0h10L5 6z" /></svg>;
const OverflowMark = () => <svg width="6" height="8" viewBox="0 0 6 8" fill="currentColor"><path d="M0 0h6v1H0zM0 3h6L3 7z" /></svg>;
const HeadTools = () => (
  <>
    <HeadButton aria-label="고정"><svg width="9" height="12" viewBox="0 0 9 12" fill="none" stroke="currentColor"><path d="M2.500 1v6M6.500 1v6M2 1.500h5M0 7.500h9M4.500 8v4" /><path d="M5.500 1v6" strokeWidth="2" /></svg></HeadButton>
    <HeadButton aria-label="닫기"><svg width="9" height="9" viewBox="0 0 9 9" stroke="currentColor"><path d="M1 1l7 7M8 1L1 8" /></svg></HeadButton>
  </>
);
const Pick = ({ w, text, label, children }: { w: number; text: string; label: string; children?: React.ReactNode }) => (
  <Combo $w={w}>
    {children}
    <select aria-label={label}><option>{text}</option></select>
    <ComboArrow><Caret /></ComboArrow>
  </Combo>
);
const IconCell = styled.span<{ $w: number }>`
  width: ${p => p.$w}px;
  display: grid;
  place-items: center;
  color: #e0e0e0;
`;

export default function App() {
  return (
    <ThemeProvider theme={small}>
      <Global />
      <Root>
        <Header>
          <svg width="29" height="39" viewBox="0 0 29 39">
            <path d="M0 9h26l3 3v18H0z" fill="#0a3fc4" />
            <path d="M0 29h29v7l-2 2H2l-2-2z" fill="#06b8c4" />
            <text x="14.500" y="23" fontSize="11" fontWeight="bold" fontFamily="Open Sans" textAnchor="middle" fill="#fff">CAD</text>
            <text x="14.500" y="36" fontSize="6" fontWeight="bold" fontFamily="Open Sans" textAnchor="middle" fill="#fff">ID</text>
          </svg>
          <HeaderRows>
            <TitleRow>
              <Quick>
                {quickIcons.map((d, i) => (
                  <QuickButton key={i} aria-label={`quick ${i + 1}`}><svg width="16" height="16" viewBox="0 0 18 18" fill="currentColor" fillRule="evenodd"><path d={d} /></svg></QuickButton>
                ))}
                <QuickButton aria-label="more"><OverflowMark /></QuickButton>
              </Quick>
              <Title><span>[CONNECTED] MIDAS CAD INFRA-DESIGN</span> - MIDAS CIM_View.cimz</Title>
              <WindowButton aria-label="최소화"><svg width="11" height="11" viewBox="0 0 11 11" fill="currentColor"><path d="M0 5h11v3H0z" /></svg></WindowButton>
              <WindowButton aria-label="복원"><svg width="14" height="12" viewBox="0 0 14 12" fill="none" stroke="currentColor" strokeWidth="1.400"><path d="M1 4h9v7H1zM4 4V1h9v7h-3M1 5h9" /></svg></WindowButton>
              <WindowButton aria-label="닫기"><svg width="11" height="11" viewBox="0 0 11 11" stroke="currentColor" strokeWidth="2"><path d="M1 1l9 9M10 1l-9 9" /></svg></WindowButton>
            </TitleRow>
            <MenuBar>
              {menus.map(([name, key]) => <button key={name}>{name}{key && <>(<u>{key}</u>)</>}</button>)}
            </MenuBar>
          </HeaderRows>
        </Header>

        <ToolRow $h={29}>
          <ToolBar>
            <Grip />
            <IconCell $w={25}><svg width="20" height="20" viewBox="0 0 20 20" fill="none" stroke="currentColor" strokeWidth="2"><path d="M6 2h13l-5 5H1z" fill="currentColor" stroke="none" /><path d="M1 10h12l6-6M1 14h12l6-6M1 18h12l6-6" /></svg></IconCell>
            <Divider />
            <Pick w={251} text="0" label="도면층">
              <svg width="68" height="20" viewBox="0 0 68 20" fill="none" stroke="#e0e0e0">
                <path d="M2 7a4 4 0 118 0c0 3-2 3-2 6v3H4v-3c0-3-2-3-2-6z" fill="#fff" stroke="none" />
                <circle cx="23" cy="10" r="3" fill="#fff" /><path d="M23 3v3M23 14v3M16 10h3M27 10h3M18 5l2 2M28 5l-2 2M18 15l2-2M28 15l-2-2" strokeWidth="1.400" />
                <path d="M36 4h8v6M40 2v14M34 9h12M36 5l8 8M44 5l-8 8" stroke="#aaa" /><path d="M46 8v9h-9" />
                <path d="M50 10h11v7H50z" fill="#ddd" stroke="none" /><path d="M58 10V6c0-4 7-4 7 0v3" strokeWidth="2" stroke="#ddd" />
              </svg>
              <Swatch $w={13} />
            </Pick>
            <Divider />
            <Pick w={167} text="ByLayer" label="색상"><Swatch $w={42} /></Pick>
            <Divider />
            <Pick w={182} text="CONTINU..." label="선종류"><LineSample $w={78} /></Pick>
            <Divider />
            <Pick w={167} text="ByLayer" label="선가중치"><LineSample $w={65} /></Pick>
            <Divider />
            <Grip />
            <IconCell $w={26}><svg width="20" height="20" viewBox="0 0 20 20" fill="currentColor"><path d="M1 2h14v5h-2V5h-3v11h2v2H5v-2h2V5H3v2H1zM12 14h8l-4 5z" /></svg></IconCell>
            <Pick w={105} text="돋움" label="문자 스타일" />
            <Divider />
            <Pick w={73} text="125,0" label="문자 높이" />
            <Divider />
            <IconCell $w={25}><svg width="18" height="20" viewBox="0 0 18 20" fill="none" stroke="currentColor" strokeWidth="1.400"><path d="M1 8h16M4 5L1 8l3 3M14 5l3 3-3 3" /><path d="M11 15h7l-3 4z" fill="currentColor" stroke="none" /></svg></IconCell>
            <Pick w={104} text="SICHUL" label="치수 스타일" />
            <Divider />
            <IconCell $w={25}><svg width="19" height="20" viewBox="0 0 19 20" fill="none" stroke="currentColor" strokeWidth="1.300"><path d="M1 18L6 7h5M6 7l3 9M1 14v4h4" /><rect x="11" y="3" width="7" height="7" /><path d="M12 14h7l-3 4z" fill="currentColor" stroke="none" /></svg></IconCell>
            <Pick w={105} text="Standard" label="지시선 스타일" />
          </ToolBar>
        </ToolRow>
        <ToolRow $h={29}>
          <ToolBar>
            {toolGroups.map((g, i) => (
              <React.Fragment key={i}>
                <Grip />
                {g.map((s, j) => <Tool key={j} $on={s.startsWith('bridge')} aria-label={s}><Icon spec={s} /></Tool>)}
                <Overflow aria-label="more"><OverflowMark /></Overflow>
              </React.Fragment>
            ))}
          </ToolBar>
        </ToolRow>
        <ToolRow $h={30}>
          <ToolBar>
            <Grip />
            {editTools.map((t, i) => (
              <Tool key={i} aria-label={`edit ${i + 1}`}><svg width="20" height="20" viewBox="0 0 20 20" fill="none" strokeWidth="1.300">{t}</svg></Tool>
            ))}
          </ToolBar>
        </ToolRow>

        <Workspace>
          <Side>
            <Panel $grow>
              <PanelHead><h2>CIM View</h2><HeadTools /></PanelHead>
              <Filter><select aria-label="필터"><option>All</option></select><Caret /></Filter>
              <Columns $end={12}><span>Item</span><span>Status</span><span /></Columns>
              <PlainRow $pad={34}><Gold>CAD 모드</Gold></PlainRow>
              <PlainRow $pad={6}><Expander><Twist open={false} /></Expander><svg width="17" height="17" viewBox="0 0 28 28" color="#ccc"><Glyph name="auto" /></svg>자동생성도면</PlainRow>
            </Panel>
            <Panel $grow>
              <PanelHead $tall><h2>도면요소</h2><HeadTools /></PanelHead>
              <ElementTree clip={334} />
            </Panel>
          </Side>

          <Center>
            <DocTabs>
              <DocTab>cDrawing1</DocTab>
              <DocTab $active>Sheet<svg width="9" height="9" viewBox="0 0 9 9" stroke="currentColor" strokeWidth="1.500"><path d="M1 1l7 7M8 1L1 8" /></svg></DocTab>
              <DocTab aria-label="새 탭"><svg width="9" height="10" viewBox="0 0 10 10" stroke="currentColor" strokeWidth="1.500"><path d="M5 0v10M0 5h10" /></svg></DocTab>
              <DocSpacer />
              <DocMore aria-label="탭 목록"><Caret /></DocMore>
            </DocTabs>
            <Canvas>
              <Drawing />
              <Crumb>CAD 모드 &gt; Sheet</Crumb>
              <ViewButton aria-label="뷰"><svg width="18" height="18" viewBox="0 0 18 18" fill="currentColor"><path d="M0 0h8v8H0zM10 0h8v8h-8zM0 10h8v8H0zM10 10h8v8h-8z" /></svg></ViewButton>
            </Canvas>
            <LayoutTabs />
            <CommandLine height={112} />
          </Center>

          <Side>
            <Panel $grow>
              <PanelHead><h2>CAD View</h2><HeadTools /></PanelHead>
              <Columns><span>Item</span></Columns>
              <PlainRow $pad={13}><svg width="16" height="16" viewBox="0 0 28 28" fill="none" stroke="#ccc" strokeWidth="2"><path d="M5 3h3v22H5zM8 5h18v20H5M12 6v18M16 6v18M20 6v18M8 10h18M8 15h18M8 20h18" /></svg><Gold>CAD 모드</Gold></PlainRow>
              <PlainRow $pad={6}><Expander><Twist open /></Expander><svg width="17" height="17" viewBox="0 0 28 28" color="#ccc"><Glyph name="auto" /></svg>캐드도면
                <ModeIcons>
                  <Mini aria-label="시트"><svg width="13" height="11" viewBox="0 0 13 11" fill="none" stroke="#eee"><path d="M1 1h11v9H1zM9 1v9M10 4h2M10 7h2" /></svg></Mini>
                  <Mini aria-label="모델"><svg width="13" height="11" viewBox="0 0 13 11" fill="#0b3f73" stroke="#1a8fff" strokeWidth="1.500"><path d="M1 1h11v9H1zM1 3h11" /></svg></Mini>
                </ModeIcons>
              </PlainRow>
              <PlainRow $pad={38}><svg width="17" height="17" viewBox="0 0 28 28" color="#ccc"><Glyph name="folder" /></svg><Latin>cDrawing1</Latin></PlainRow>
              <PlainRow $pad={16}><Expander><Twist open={false} /></Expander><svg width="17" height="17" viewBox="0 0 28 28" color="#ccc"><Glyph name="auto" /></svg><Picked>Sheet</Picked></PlainRow>
            </Panel>
            <Panel>
              <PanelHead $tall><h2>특성</h2><HeadTools /></PanelHead>
              <SelectionRow>
                <SelectionPick><select aria-label="선택 요소"><option>선택 요소가 없습니다.</option></select><Caret /></SelectionPick>
                <PropButton aria-label="여러 개"><svg width="18" height="18" viewBox="0 0 18 18" fill="none" stroke="currentColor"><rect x="1" y="1" width="16" height="16" strokeDasharray="1 1" /><path d="M3 3h5v5H3z" fill="currentColor" /><path d="M10.500 3.500h4v4h-4zM3.500 10.500h4v4h-4zM10.500 10.500h4v4h-4z" /></svg></PropButton>
                <PropButton aria-label="하나"><svg width="18" height="18" viewBox="0 0 18 18" fill="none" stroke="currentColor"><path d="M4 1h13v13H4z" strokeDasharray="2 1" /><path d="M2 4v12h12" strokeDasharray="2 1" /><path d="M9 5h2v6M8 11h5" strokeWidth="1.600" /></svg></PropButton>
                <PropButton aria-label="선택"><svg width="18" height="18" viewBox="0 0 18 18" fill="none" stroke="currentColor"><rect x="1" y="1" width="16" height="16" strokeDasharray="2 1" /><path d="M7 4v10l2-2 2 3 1-1-1-3h3z" fill="currentColor" stroke="none" /></svg></PropButton>
                <PropButton aria-label="신속 선택"><svg width="18" height="18" viewBox="0 0 18 18" fill="currentColor"><path d="M2 4v12l3-3 2 4 2-1-2-4h4zM10 1h5l-2 4h4l-8 8 2-6H8z" /></svg></PropButton>
              </SelectionRow>
              <PropTable>
                <colgroup><col /><col /><col /></colgroup>
                <tbody>
                  {groups.map(g => (
                    <React.Fragment key={g.name}>
                      <Group><td><svg width="8" height="9" viewBox="0 0 10 12" fill="none" stroke="#1fb59c" strokeWidth="1.800"><path d="M8.500 3.500v7H2z" /></svg></td><th colSpan={2}>{g.name}</th></Group>
                      {g.rows.map(([k, v, dim]) => <PropRow key={k} $dim={dim}><td /><th scope="row">{k}</th><td>{v}</td></PropRow>)}
                    </React.Fragment>
                  ))}
                </tbody>
              </PropTable>
              <PropRest />
            </Panel>
          </Side>
        </Workspace>

        <ContextMenu x={189} y={780} />
        <Marker $x={0} $y={625} $w={509} $h={386} />

        <ThemeProvider theme={large}>
          <Magnified>
            <MagTree><ElementTree /></MagTree>
            <MagRight>
              <Canvas>
                <svg width="422" height="595" viewBox="1233 165 422 595" fill="none" stroke="#e4e4e4" strokeWidth="2">
                  <path d="M1291 272v130M1571 652h45v42M1495 682l23 28M1518 682l-24 28M1462 696h3" />
                </svg>
              </Canvas>
              <LayoutTabs />
              <CommandLine height={201} />
            </MagRight>
            <ContextMenu x={336} y={225} />
            <Marker $x={56} $y={538} $w={259} $h={43} />
          </Magnified>
        </ThemeProvider>
      </Root>
    </ThemeProvider>
  );
}
